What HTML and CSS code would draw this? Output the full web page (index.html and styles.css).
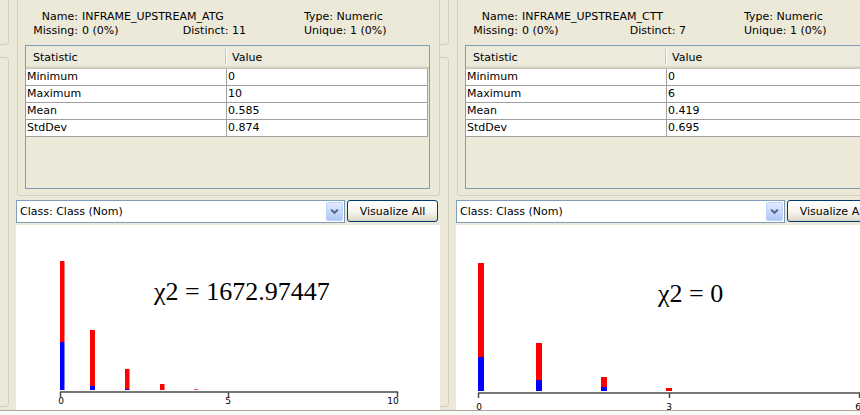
FILE: index.html
```html
<!DOCTYPE html>
<html>
<head>
<meta charset="utf-8">
<title>Attribute summaries</title>
<link rel="stylesheet" href="styles.css">
</head>
<body>
<div class="explorer">

  <section class="attr-panel">
    <div class="gutter"><span class="edge edge-upper"></span><span class="edge edge-lower"></span></div>
    <div class="attr-main">
      <div class="summary">
        <div class="info">
          <div class="info-row">
            <span class="lbl">Name:</span>
            <span class="mid"><span>INFRAME_UPSTREAM_ATG</span></span>
            <span class="side">Type: Numeric</span>
          </div>
          <div class="info-row">
            <span class="lbl">Missing:</span>
            <span class="mid"><span>0 (0%)</span><span>Distinct: 11</span></span>
            <span class="side">Unique: 1 (0%)</span>
          </div>
        </div>
        <div class="stats">
          <div class="stats-head"><span class="c1">Statistic</span><span class="c2">Value</span></div>
          <div class="stats-row"><span class="c1">Minimum</span><span class="c2">0</span></div>
          <div class="stats-row"><span class="c1">Maximum</span><span class="c2">10</span></div>
          <div class="stats-row"><span class="c1">Mean</span><span class="c2">0.585</span></div>
          <div class="stats-row"><span class="c1">StdDev</span><span class="c2">0.874</span></div>
        </div>
      </div>
      <div class="controls">
        <div class="combo">
          <span class="combo-text">Class: Class (Nom)</span>
          <span class="combo-btn"><svg width="9" height="7" viewBox="0 0 9 7"><path d="M1.2 1.6 L4.5 4.9 L7.8 1.6" fill="none" stroke="#4D6185" stroke-width="2"/></svg></span>
        </div>
        <button class="btn" type="button">Visualize All</button>
      </div>
      <div class="plot">
        <svg class="hist" width="424" height="185" viewBox="0 0 424 185">
          <text class="chi" x="138" y="75">χ2 = 1672.97447</text>
          <rect class="pos" x="44" y="36" width="4.5" height="81"/>
          <rect class="neg" x="44" y="117" width="4.5" height="48"/>
          <rect class="pos" x="74" y="105" width="5" height="56"/>
          <rect class="neg" x="74" y="161" width="5" height="4"/>
          <rect class="pos" x="109" y="144" width="4.5" height="20"/>
          <rect class="neg" x="109" y="164" width="4.5" height="1"/>
          <rect class="pos" x="144" y="159" width="4.5" height="6"/>
          <rect class="pos thin" x="178" y="164" width="4.5" height="1"/>
          <line class="axis" x1="44" y1="167" x2="382" y2="167"/>
          <line class="axis" x1="44.5" y1="167" x2="44.5" y2="172"/>
          <line class="axis" x1="212.5" y1="167" x2="212.5" y2="172"/>
          <line class="axis" x1="381.5" y1="167" x2="381.5" y2="172"/>
          <text class="tick" x="45" y="179">0</text>
          <text class="tick" x="212" y="179">5</text>
          <text class="tick" x="377" y="179">10</text>
        </svg>
      </div>
    </div>
  </section>

  <section class="attr-panel">
    <div class="gutter"><span class="edge edge-upper"></span><span class="edge edge-lower"></span></div>
    <div class="attr-main">
      <div class="summary">
        <div class="info">
          <div class="info-row">
            <span class="lbl">Name:</span>
            <span class="mid"><span>INFRAME_UPSTREAM_CTT</span></span>
            <span class="side">Type: Numeric</span>
          </div>
          <div class="info-row">
            <span class="lbl">Missing:</span>
            <span class="mid"><span>0 (0%)</span><span>Distinct: 7</span></span>
            <span class="side">Unique: 1 (0%)</span>
          </div>
        </div>
        <div class="stats">
          <div class="stats-head"><span class="c1">Statistic</span><span class="c2">Value</span></div>
          <div class="stats-row"><span class="c1">Minimum</span><span class="c2">0</span></div>
          <div class="stats-row"><span class="c1">Maximum</span><span class="c2">6</span></div>
          <div class="stats-row"><span class="c1">Mean</span><span class="c2">0.419</span></div>
          <div class="stats-row"><span class="c1">StdDev</span><span class="c2">0.695</span></div>
        </div>
      </div>
      <div class="controls">
        <div class="combo">
          <span class="combo-text">Class: Class (Nom)</span>
          <span class="combo-btn"><svg width="9" height="7" viewBox="0 0 9 7"><path d="M1.2 1.6 L4.5 4.9 L7.8 1.6" fill="none" stroke="#4D6185" stroke-width="2"/></svg></span>
        </div>
        <button class="btn" type="button">Visualize All</button>
      </div>
      <div class="plot">
        <svg class="hist" width="424" height="185" viewBox="0 0 424 185">
          <text class="chi" x="202" y="77">χ2 = 0</text>
          <rect class="pos" x="22" y="38" width="6" height="94"/>
          <rect class="neg" x="22" y="132" width="6" height="34"/>
          <rect class="pos" x="80" y="118" width="6" height="37"/>
          <rect class="neg" x="80" y="155" width="6" height="11"/>
          <rect class="pos" x="145" y="152" width="6" height="10"/>
          <rect class="neg" x="145" y="162" width="6" height="4"/>
          <rect class="pos" x="210" y="163" width="6" height="3"/>
          <line class="axis" x1="22" y1="168" x2="404" y2="168"/>
          <line class="axis" x1="22.5" y1="168" x2="22.5" y2="173"/>
          <line class="axis" x1="213.5" y1="168" x2="213.5" y2="173"/>
          <line class="axis" x1="403.5" y1="168" x2="403.5" y2="173"/>
          <text class="tick" x="23" y="185">0</text>
          <text class="tick" x="213" y="185">3</text>
          <text class="tick" x="402" y="185">6</text>
        </svg>
      </div>
    </div>
  </section>

</div>
<div class="status"></div>
</body>
</html>
```

FILE: styles.css
```css
html, body {
  margin: 0;
  padding: 0;
}

body {
  width: 860px;
  height: 415px;
  overflow: hidden;
  background: #ECE9D8;
  color: #000;
  font: 11px "DejaVu Sans", Tahoma, sans-serif;
}

/* two attribute panels side by side */
.explorer {
  display: flex;
  width: 880px;
  height: 410px;
}

.attr-panel {
  flex: none;
  width: 440px;
  display: flex;
}

/* left strip with the neighbouring pane's rounded edges */
.gutter {
  flex: none;
  width: 16px;
  display: flex;
  flex-direction: column;
}

.edge {
  display: block;
  width: 9px;
  box-sizing: border-box;
  border: 1px solid #D0D0BF;
  border-left: none;
}

.edge-upper {
  height: 45px;
  border-top: none;
  border-bottom-right-radius: 4px;
}

.edge-lower {
  margin-top: 12px;
  height: 350px;
  border-radius: 0 4px 4px 0;
}

.attr-main {
  flex: none;
  width: 424px;
  display: flex;
  flex-direction: column;
}

/* selected attribute group box */
.summary {
  box-sizing: border-box;
  margin-left: 1px;
  width: 423px;
  height: 196px;
  border: 1px solid #D0D0BF;
  border-top: none;
  border-radius: 0 0 4px 4px;
  padding-top: 10px;
}

.info-row {
  display: flex;
  line-height: 14px;
  white-space: nowrap;
}

.lbl {
  width: 60px;
  text-align: right;
}

.mid {
  margin-left: 4px;
  width: 164px;
  display: flex;
  justify-content: space-between;
}

.side {
  margin-left: 58px;
}

/* statistics table */
.stats {
  box-sizing: border-box;
  margin: 7px 0 0 7px;
  width: 405px;
  height: 144px;
  border: 1px solid #7F9DB9;
  background: #ECE9D8;
}

.stats-head {
  display: flex;
  height: 23px;
  background: linear-gradient(to bottom,
    #EBEADB 0, #EBEADB 20px,
    #E2DECD 20px, #E2DECD 21px,
    #D6D2C2 21px, #D6D2C2 22px,
    #CBC7B8 22px, #CBC7B8 23px);
}

.stats-head span {
  line-height: 20px;
  padding-top: 2px;
}

.stats-head .c1 {
  box-sizing: border-box;
  width: 201px;
  padding-left: 7px;
  background:
    linear-gradient(#C7C5B2, #C7C5B2) right 1px top 3px / 1px 15px no-repeat,
    linear-gradient(#FFFFFF, #FFFFFF) right 0 top 3px / 1px 15px no-repeat;
}

.stats-head .c2 {
  padding-left: 5px;
}

.stats-row {
  display: flex;
  box-sizing: border-box;
  height: 17px;
  line-height: 16px;
  background: #fff;
  border-bottom: 1px solid #A0A0A0;
  border-right: 1px solid #A0A0A0;
  margin-right: 1px;
}

.stats-row .c1 {
  box-sizing: border-box;
  width: 201px;
  padding-left: 1px;
  border-right: 1px solid #A0A0A0;
}

.stats-row .c2 {
  padding-left: 1px;
}

/* class selector and button */
.controls {
  display: flex;
  margin-top: 4px;
  height: 23px;
}

.combo {
  box-sizing: border-box;
  width: 329px;
  height: 23px;
  border: 1px solid #7F9DB9;
  background: #fff;
  display: flex;
  align-items: center;
  padding: 0 1px 0 3px;
}

.combo-text {
  flex: 1;
}

.combo-btn {
  box-sizing: border-box;
  width: 17px;
  height: 19px;
  border: 1px solid #BAD1FC;
  border-radius: 2px;
  background: linear-gradient(#E1EAFE, #C6D6FC 55%, #B3C7F5);
  display: flex;
  align-items: center;
  justify-content: center;
}

.combo-btn svg {
  display: block;
}

.btn {
  box-sizing: border-box;
  margin-left: 2px;
  width: 91px;
  height: 22px;
  padding: 0;
  border: 1px solid #003C74;
  border-radius: 3px;
  background: linear-gradient(#FFFFFF, #F5F4EF 55%, #E6E3D6 85%, #D6D0C5);
  color: #000;
  font: 11px "DejaVu Sans", Tahoma, sans-serif;
}

/* class histogram */
.plot {
  margin-top: 2px;
  height: 185px;
  background: #fff;
  overflow: hidden;
}

.hist {
  display: block;
}

.hist .pos {
  fill: #FF0000;
}

.hist .neg {
  fill: #0000FF;
}

.hist .thin {
  fill: #FF6060;
}

.hist .axis {
  stroke: #4A4A4A;
  stroke-width: 1.5;
}

.hist .tick {
  font: 9px "DejaVu Sans", sans-serif;
  text-anchor: middle;
  fill: #000;
}

.hist .chi {
  font: 26px "Liberation Serif", "Times New Roman", serif;
  fill: #000;
}

.status {
  box-sizing: border-box;
  width: 860px;
  height: 5px;
  border-top: 1px solid #ACA899;
  background: #FAFAF7;
}
```
